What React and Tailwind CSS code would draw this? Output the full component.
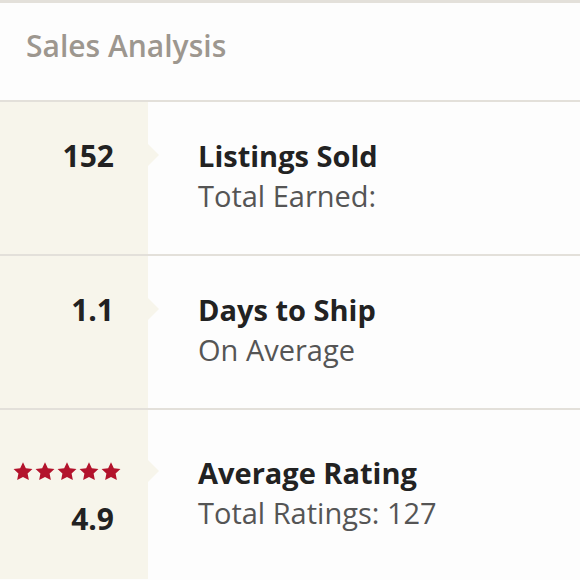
const font = { fontFamily: '"Open Sans", "Noto Sans", sans-serif' };

function StarIcon() {
  return (
    <svg viewBox="0 0 24 24" className="h-[23px] w-[22px]">
      <path
        d="M12 1.8l3.1 6.6 7.2.9-5.3 5 1.4 7.1L12 17.9l-6.4 3.5 1.4-7.1-5.3-5 7.2-.9z"
        fill="#b3132c"
      />
    </svg>
  );
}

function Row({ left, title, subtitle, pad = 'pt-[36px]', pointerTop = 'top-[42px]', last = false }) {
  return (
    <div className={`flex ${last ? 'h-[169px]' : 'h-[154px] border-b-2 border-[#e3e0da]'}`}>
      <div className={`relative w-[148px] shrink-0 bg-[#f7f5eb] pr-[34px] ${pad}`}>
        {left}
        <div
          className={`absolute right-[-11px] ${pointerTop} h-0 w-0 border-y-[11px] border-l-[11px] border-y-transparent border-l-[#f7f5eb]`}
        />
      </div>
      <div className={`flex-1 pl-[50px] ${pad}`}>
        <div className="text-[29px] font-bold leading-[36px] text-[#222]">{title}</div>
        <div className="mt-[4px] text-[29px] leading-[36px] text-[#555]">{subtitle}</div>
      </div>
    </div>
  );
}

export default function App() {
  return (
    <div className="h-[580px] w-[580px] overflow-hidden border-t-[3px] border-[#e3e0da] bg-[#fdfdfd]" style={font}>
      <div className="flex h-[99px] items-center border-b-2 border-[#e3e0da] pl-[26px] pb-[12px]">
        <h2 className="text-[30px] font-semibold text-[#9d978f]">Sales Analysis</h2>
      </div>

      <Row
        left={<div className="text-right text-[30px] font-bold leading-[36px] text-[#222]">152</div>}
        title="Listings Sold"
        subtitle="Total Earned:"
      />
      <Row
        left={<div className="text-right text-[30px] font-bold leading-[36px] text-[#222]">1.1</div>}
        title="Days to Ship"
        subtitle="On Average"
      />
      <Row
        last
        pad="pt-[45px]"
        pointerTop="top-[50px]"
        left={
          <div className="flex flex-col items-end">
            <div className="mr-[-8px] mt-[4px] flex h-[24px] items-center gap-0">
              {[0, 1, 2, 3, 4].map((i) => (
                <StarIcon key={i} />
              ))}
            </div>
            <div className="mt-[18px] text-[30px] font-bold leading-[36px] text-[#222]">4.9</div>
          </div>
        }
        title="Average Rating"
        subtitle="Total Ratings: 127"
      />
    </div>
  );
}
